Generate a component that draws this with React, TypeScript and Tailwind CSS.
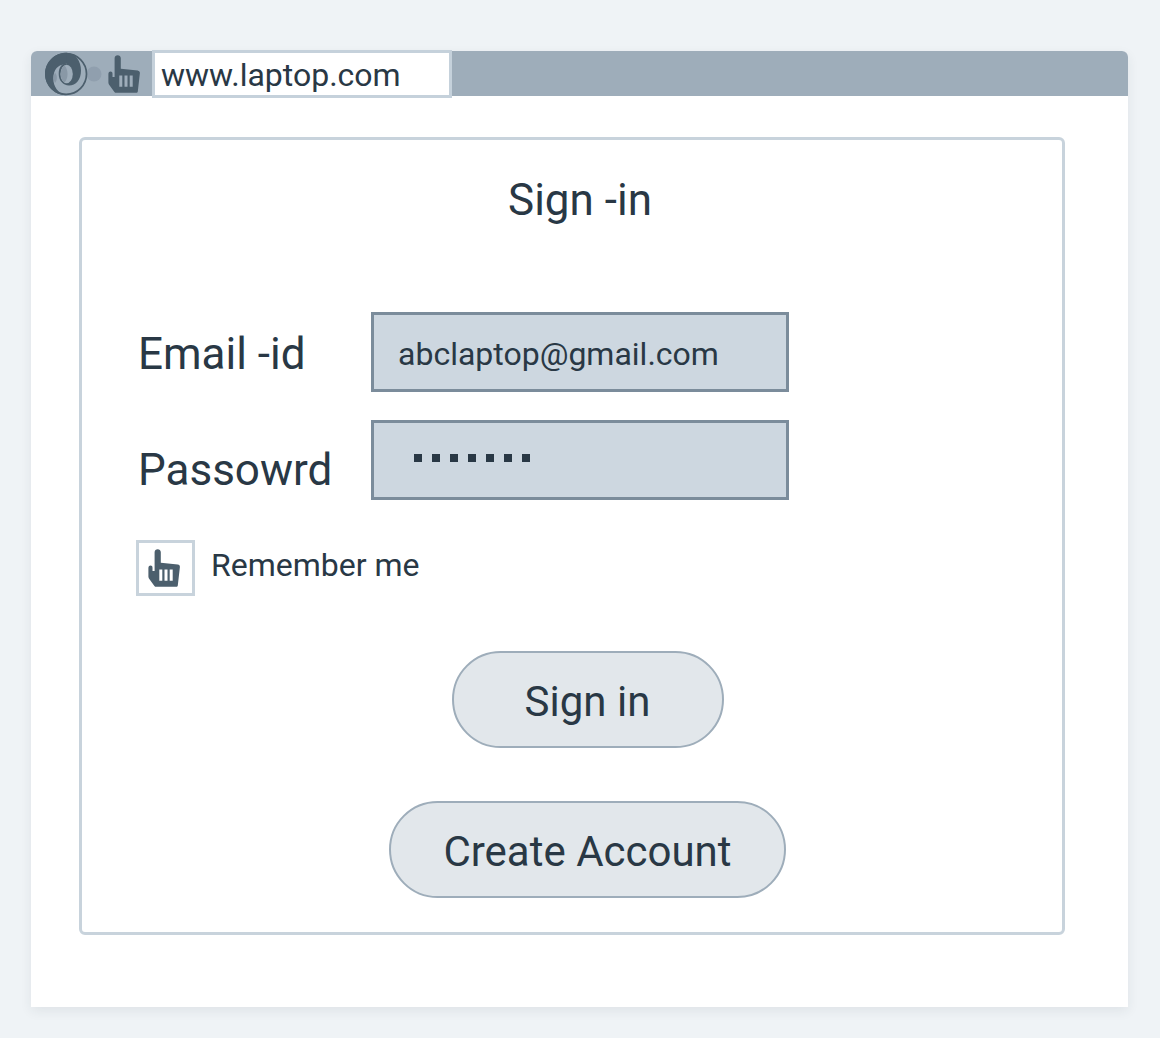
import { useState } from "react";

function HandIcon() {
  return (
    <svg viewBox="0 0 32 38" className="h-[38px] w-8 shrink-0" aria-hidden="true">
      <path
        fill="#4c5f6d"
        fillRule="evenodd"
        d="M6.6 3.3C6.6 1.4 8 .2 9.7.2s3.1 1.2 3.1 3.100v10.500l17 1.800c1.400.200 2.200 1.100 2.100 2.500l-2.100 18.300c-.1.900-.7 1.300-1.500 1.300H8.200c-.8 0-1.300-.2-1.800-.8L1.500 30.200C.7 29.300.4 28.500.4 27.300V19.200c0-1.700.8-2.700 2.100-2.700s2 .9 2 2.200v3.200h2.100zM11.300 20.500v11.200h3V20.500zm5.200 0v11.200h3V20.500zm5.200 0v11.200h3V20.500z"
      />
    </svg>
  );
}

function SwirlLogo() {
  return (
    <svg viewBox="0 0 58 44" className="h-11 w-[58px] shrink-0" aria-hidden="true">
      <circle cx="50" cy="22" r="7.500" fill="#909fae" />
      <circle cx="22.200" cy="22" r="20.300" fill="none" stroke="#4c5f6d" strokeWidth="1.700" />
      <path
        fill="#4c5f6d"
        d="M22.200 .8C10.500.8 1 10.300 1 22s9.500 21.200 21.200 21.200C14 41.500 9.300 34.500 9.300 26.500 9.300 18 14 12.500 20.500 12.500L28 8z"
      />
      <path fill="#8998a6" d="M11 20.500c-1.800 3.500-1.800 7.500 0 10.500 2.500-3 2.500-7.500 0-10.500z" />
      <path
        fill="#4c5f6d"
        d="M22.200 .8C32 .8 37 9.500 37 18.500 37 27.500 32 33.500 25 33.500c-6 0-10.300-5-10.300-11.700 0-6.500 3.500-10.500 8-10.500z"
      />
      <ellipse cx="22.600" cy="22" rx="6.200" ry="9.200" fill="#9eadba" />
      <path fill="#8998a6" d="M20.500 13.500c-5 3.500-5 13.500 0 17 4-4 4-13 0-17z" />
    </svg>
  );
}

const field =
  "h-20 w-full border-[3px] border-[#7b8c9b] bg-[#cdd7e0] text-[32px] text-[#293845] outline-none";
const pill =
  "h-[97px] rounded-full border-2 border-[#9eadba] bg-[#e2e7eb] pt-1 text-[42px] leading-[48px]";

export default function App() {
  const [email, setEmail] = useState("abclaptop@gmail.com");
  const [password, setPassword] = useState("letmein");
  const [url, setUrl] = useState("www.laptop.com");

  return (
    <div className="flex min-h-screen flex-col bg-[#eff3f6] pt-[51px] pr-8 pb-[31px] pl-[31px] font-['Roboto',sans-serif] text-[#293845]">
      <main className="flex-1 rounded-t-md bg-white shadow-[0_4px_12px_rgba(41,56,69,0.08)]">
        <header className="flex h-[45px] items-center rounded-t-md bg-[#9eadba] pl-[13px]">
          <SwirlLogo />
          <div className="mr-3 ml-1.5">
            <HandIcon />
          </div>
          <input
            type="text"
            aria-label="Address"
            value={url}
            onChange={(e) => setUrl(e.target.value)}
            className="h-12 w-[300px] border-[3px] border-[#c5d1db] bg-white pt-0.5 pl-1.5 text-[32px] outline-none"
          />
        </header>

        <form
          onSubmit={(e) => e.preventDefault()}
          className="mt-[41px] mr-[63px] mb-[71px] ml-12 rounded-md border-[3px] border-[#c8d3dc] pt-9 pb-[34px]"
        >
          <h1 className="pl-4 text-center text-[44px] leading-[48px]">Sign -in</h1>

          <div className="mt-[88px] grid grid-cols-[233px_418px] gap-y-7 pl-14 text-[44px] leading-[48px]">
            <label htmlFor="email" className="pt-[18px]">
              Email -id
            </label>
            <input
              id="email"
              type="email"
              value={email}
              onChange={(e) => setEmail(e.target.value)}
              className={`${field} px-6 pt-1`}
            />
            <label htmlFor="password" className="pt-[26px]">
              Passowrd
            </label>
            <div className="relative">
              <input
                id="password"
                type="password"
                value={password}
                onChange={(e) => setPassword(e.target.value)}
                className="h-20 w-full border-[3px] border-[#7b8c9b] bg-[#cdd7e0] px-10 text-[32px] text-transparent outline-none"
              />
              <div
                aria-hidden="true"
                className="pointer-events-none absolute top-[34px] left-[43px] flex gap-2.5"
              >
                {Array.from(password, (_, i) => (
                  <span key={i} className="size-2 bg-[#293845]" />
                ))}
              </div>
            </div>
          </div>

          <div className="mt-10 flex items-center gap-4 pl-[54px]">
            <div className="relative flex h-14 w-[59px] items-center justify-center">
              <input
                id="remember"
                type="checkbox"
                defaultChecked
                className="peer absolute inset-0 size-full appearance-none border-[3px] border-[#c8d3dc] bg-white"
              />
              <div className="pointer-events-none relative pr-1 opacity-0 peer-checked:opacity-100">
                <HandIcon />
              </div>
            </div>
            <label htmlFor="remember" className="pb-1.5 text-[32px] leading-[48px]">
              Remember me
            </label>
          </div>

          <div className="mt-[55px] flex flex-col items-center gap-[53px] pl-[31px]">
            <button type="submit" className={`${pill} w-[272px]`}>
              Sign in
            </button>
            <button type="button" className={`${pill} w-[397px]`}>
              Create Account
            </button>
          </div>
        </form>
      </main>
    </div>
  );
}
